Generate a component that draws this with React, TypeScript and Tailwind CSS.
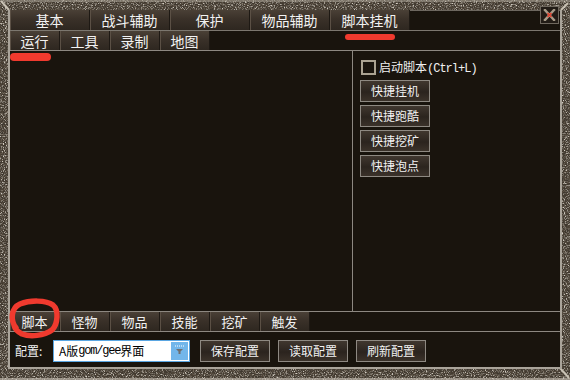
import React from "react";

function Texture() {
  return (
    <svg className="absolute inset-0" width="570" height="380" aria-hidden>
      <defs>
        <filter id="stone" x="0" y="0" width="100%" height="100%">
          <feTurbulence type="fractalNoise" baseFrequency="0.9" numOctaves="2" seed="7" result="t" />
          <feColorMatrix
            in="t"
            type="matrix"
            values="0 0 0 0 0.66  0 0 0 0 0.62  0 0 0 0 0.55  3.4 0 0 0 -1.55"
          />
        </filter>
        <filter id="dark" x="0" y="0" width="100%" height="100%">
          <feTurbulence type="fractalNoise" baseFrequency="0.55" numOctaves="2" seed="21" result="t" />
          <feColorMatrix
            in="t"
            type="matrix"
            values="0 0 0 0 0.08  0 0 0 0 0.06  0 0 0 0 0.04  3 0 0 0 -1.2"
          />
        </filter>
      </defs>
      <rect width="570" height="380" fill="#3f382f" />
      <rect width="570" height="380" filter="url(#stone)" />
      <rect width="570" height="380" filter="url(#dark)" />
      <rect x="0" y="0" width="570" height="2" fill="#bdb6a8" opacity="0.45" />
      <rect x="0" y="378" width="570" height="2" fill="#d8d2c6" opacity="0.55" />
      <path d="M1 1 L9 10" stroke="#c9c2b4" strokeWidth="2" />
      <path d="M560 368 L569 378" stroke="#c9c2b4" strokeWidth="2" />
      <path d="M561 10 L568 3" stroke="#c9c2b4" strokeWidth="2" />
    </svg>
  );
}

const tabBg =
  "bg-[linear-gradient(#4a4036,#3a3129_45%,#2e2720)] border-r border-[#1e1914] shadow-[inset_1px_0_0_#5b5045]";

function BigTab({ label }: { label: string }) {
  return (
    <div
      className={`flex h-full w-[80px] items-center justify-center text-[14px] leading-none text-[#f2f2f2] ${tabBg}`}
    >
      {label}
    </div>
  );
}

function SmallTab({ label, size }: { label: string; size: "md" | "sm" }) {
  return (
    <div
      className={`flex h-full w-[50px] items-center justify-center leading-none text-[#f2f2f2] ${
        size === "md" ? "text-[14px]" : "text-[13px]"
      } ${tabBg}`}
    >
      {label}
    </div>
  );
}

function QuickButton({ label }: { label: string }) {
  return (
    <div className="flex h-[22px] w-[70px] items-center justify-center border border-[#8e8982] bg-[linear-gradient(#40372f,#2b241e_55%,#3b322a)] text-[12px] leading-none text-[#f2f2f2]">
      {label}
    </div>
  );
}

function CloseButton() {
  return (
    <div className="absolute left-[540px] top-[6px] flex h-[18px] w-[19px] items-center justify-center border border-[#6f685e] bg-[#221c16]">
      <svg width="13" height="12" viewBox="0 0 13 12">
        <path d="M2 1 L11 11 M11 1 L2 11" stroke="#a99d8a" strokeWidth="2.4" strokeLinecap="square" />
        <path d="M4.5 4 L8.5 8 M8.5 4 L4.5 8" stroke="#e0402f" strokeWidth="1.6" />
      </svg>
    </div>
  );
}

export default function App() {
  return (
    <div className="relative h-[380px] w-[570px] overflow-hidden font-['Noto_Sans_CJK_SC',sans-serif]">
      <Texture />
      <div className="relative flex h-full flex-col pb-[11px] pl-[8px] pr-[8px] pt-[10px]">
        <div className="flex flex-1 flex-col border-b-2 border-l-2 border-r-2 border-[#aaa49a] bg-[#19140d]">
          {/* Row 1 tabs */}
          <div className="flex h-[21px] border-b border-[#7c776f]">
            <BigTab label="基本" />
            <BigTab label="战斗辅助" />
            <BigTab label="保护" />
            <BigTab label="物品辅助" />
            <BigTab label="脚本挂机" />
            <div className="flex-1 border-t border-[#6d675f] bg-[#19140d]" />
          </div>
          {/* Row 2 tabs */}
          <div className="flex h-[20px] border-b border-[#8d8881]">
            <SmallTab label="运行" size="md" />
            <SmallTab label="工具" size="md" />
            <SmallTab label="录制" size="md" />
            <SmallTab label="地图" size="md" />
            <div className="flex-1" />
          </div>
          {/* Main area */}
          <div className="flex h-[260px]">
            <div className="flex-1 border-r border-[#8d8881]" />
            <div className="flex w-[207px] flex-col pl-[7px] pt-[9px]">
              <div className="flex items-center gap-[3px] pl-[1px]">
                <div className="h-[15px] w-[15px] border-2 border-[#aaa291] bg-[#19140d]" />
                <span className="text-[12px] leading-none text-[#f0f0f0]">
                  启动脚本
                  <span className="font-['Liberation_Mono',monospace] tracking-[-1px]">(Ctrl+L)</span>
                </span>
              </div>
              <div className="mt-[5px] flex flex-col gap-[3px]">
                <QuickButton label="快捷挂机" />
                <QuickButton label="快捷跑酷" />
                <QuickButton label="快捷挖矿" />
                <QuickButton label="快捷泡点" />
              </div>
            </div>
          </div>
          {/* Bottom tabs */}
          <div className="flex h-[21px] border-b border-t border-[#8d8881]">
            <SmallTab label="脚本" size="sm" />
            <SmallTab label="怪物" size="sm" />
            <SmallTab label="物品" size="sm" />
            <SmallTab label="技能" size="sm" />
            <SmallTab label="挖矿" size="sm" />
            <SmallTab label="触发" size="sm" />
            <div className="flex-1" />
          </div>
          {/* Config row */}
          <div className="flex flex-1 items-start pl-[5px] pt-[8px]">
            <div className="flex h-[22px] w-[38px] items-center text-[12px] leading-none text-[#f0f0f0]">
              配置:
            </div>
            <div className="flex h-[22px] w-[137px] border border-[#5aa6e2] bg-white">
              <div className="flex flex-1 items-center pl-[5px] text-[12px] leading-none text-black">
                A版<span className="font-['Liberation_Mono',monospace] tracking-[-1.2px]">gom/gee</span>界面
              </div>
              <div className="flex h-full w-[19px] items-start justify-center border border-white bg-[#72b6ea] pt-[3px]">
                <svg width="11" height="10" viewBox="0 0 11 10">
                  <path d="M1 1 H10" stroke="#ffffff" strokeWidth="1" strokeDasharray="1 1" />
                  <path d="M2 4 H9 L6.5 6.5 V9 H4.5 V6.5 Z" fill="#6f6f6f" />
                </svg>
              </div>
            </div>
            <div className="ml-[10px] flex gap-[8px]">
              <QuickButton label="保存配置" />
              <QuickButton label="读取配置" />
              <QuickButton label="刷新配置" />
            </div>
          </div>
        </div>
      </div>
      <CloseButton />
      {/* red annotations */}
      <div className="absolute left-[345px] top-[34px] h-[6px] w-[50px] rounded-full bg-[#f03a2e]" />
      <div className="absolute left-[10px] top-[53px] h-[8px] w-[41px] rounded-full bg-[#f03a2e]" />
      <svg className="absolute left-[6px] top-[298px]" width="56" height="42" viewBox="0 0 56 42" aria-hidden>
        <path
          d="M10 30 C 4 22, 5 10, 14 6 C 24 2, 40 2, 47 7 C 53 12, 52 26, 46 32 C 38 38, 24 39, 16 36 C 12 34, 9 32, 8 27"
          fill="none"
          stroke="#f03a2e"
          strokeWidth="5.5"
          strokeLinecap="round"
        />
      </svg>
    </div>
  );
}
